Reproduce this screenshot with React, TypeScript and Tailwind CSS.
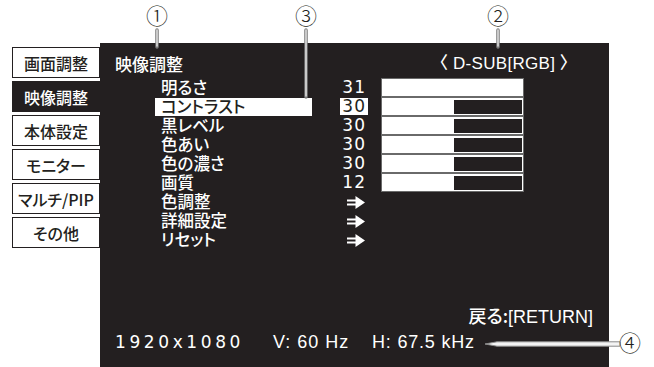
import React from 'react';

const tabs = ['画面調整', '映像調整', '本体設定', 'モニター', 'マルチ/PIP', 'その他'];

type Row = { label: string; value?: string; dark?: number; arrow?: boolean; selected?: boolean };

const rows: Row[] = [
  { label: '明るさ', value: '31', dark: 0 },
  { label: 'コントラスト', value: '30', dark: 68, selected: true },
  { label: '黒レベル', value: '30', dark: 68 },
  { label: '色あい', value: '30', dark: 68 },
  { label: '色の濃さ', value: '30', dark: 68 },
  { label: '画質', value: '12', dark: 68 },
  { label: '色調整', arrow: true },
  { label: '詳細設定', arrow: true },
  { label: 'リセット', arrow: true },
];

const jp = "font-['Noto_Sans_CJK_JP','Noto_Sans',sans-serif] [font-feature-settings:'palt']";

function Arrow() {
  return (
    <svg width="19" height="13" viewBox="0 0 19 13" className="block">
      <rect x="0" y="3.5" width="9" height="2" fill="white" />
      <rect x="0" y="7.5" width="9" height="2" fill="white" />
      <polygon points="8.5,0 18,6.5 8.5,13" fill="white" />
    </svg>
  );
}

function Callout({ n, left, top }: { n: string; left: number; top: number }) {
  return (
    <span
      className="absolute w-[30px] h-[30px] text-center leading-[30px] text-[22px] text-[#231f20] font-light whitespace-nowrap font-['DejaVu_Sans','Noto_Sans_CJK_JP',sans-serif]"
      style={{ left, top }}
    >
      {n}
    </span>
  );
}

export default function App() {
  return (
    <div className={`relative w-[654px] h-[367px] bg-white overflow-hidden font-medium ${jp}`}>
      <div className="flex pt-[43px]">
        {/* side tabs */}
        <div className="w-[100px] pl-[12px] pt-[4px] flex flex-col gap-[3px]">
          {tabs.map((t, i) =>
            i === 1 ? (
              <div key={t} className="w-[88px] h-[31px] bg-[#231f20] text-white text-[16px] flex items-center justify-center">
                {t}
              </div>
            ) : (
              <div
                key={t}
                className="w-[88px] h-[31px] bg-white border border-[#231f20] text-[#231f20] text-[16px] flex items-center justify-center whitespace-nowrap"
              >
                {t}
              </div>
            )
          )}
        </div>

        {/* menu panel */}
        <div className="w-[509px] h-[324px] bg-[#231f20] text-white flex flex-col">
          <div className="mt-[11px] h-[20px] flex items-center justify-between pl-[15px] pr-[40px]">
            <span className="text-[17px]">映像調整</span>
            <span className="text-[17px] tracking-[0.3px] font-['Liberation_Sans','Noto_Sans_CJK_JP',sans-serif]">〈 D-SUB[RGB] 〉</span>
          </div>

          <div className="mt-[4px] flex flex-col">
            {rows.map((r) => (
              <div key={r.label} className="h-[19px] flex items-center pl-[55px]">
                <div
                  className={`w-[157px] h-[18px] pl-[6px] flex items-center text-[16.5px] leading-none ${
                    r.selected ? 'bg-white text-[#231f20]' : ''
                  }`}
                >
                  {r.label}
                </div>
                <div className="ml-[28px] w-[28px] h-[17px] flex items-center justify-end">
                  {r.arrow ? (
                    <div className="pr-[2px] pt-[2px]">
                      <Arrow />
                    </div>
                  ) : (
                    <span
                      className={`h-[17px] w-[28px] pr-[2px] text-right text-[17px] leading-[17px] tracking-[1px] font-normal font-['DejaVu_Sans',sans-serif] ${
                        r.selected ? 'bg-white text-[#231f20]' : ''
                      }`}
                    >
                      {r.value}
                    </span>
                  )}
                </div>
                {!r.arrow && (
                  <div className="ml-[14px] w-[141px] h-[17px] bg-white p-[1.5px] flex justify-end ring-1 ring-[#6a6a6a]">
                    <div className="h-full bg-[#231f20]" style={{ width: r.dark }} />
                  </div>
                )}
              </div>
            ))}
          </div>

          <div className="flex-1" />

          <div className="flex justify-end pr-[16px] text-[18px] leading-none">
            <span>
              戻る:<span className="font-['Liberation_Sans',sans-serif] font-normal">[RETURN]</span>
            </span>
          </div>
          <div className="mt-[6px] mb-[15px] h-[20px] flex items-center pl-[15px] font-['Liberation_Sans',sans-serif] font-normal text-[18px] leading-none">
            <span className="w-[158px] tracking-[3.6px] font-['DejaVu_Sans',sans-serif] text-[17px]">1920x1080</span>
            <span className="w-[99px] tracking-[1px]">V: 60 Hz</span>
            <span className="tracking-[0.8px]">H: 67.5 kHz</span>
          </div>
        </div>
      </div>

      {/* annotation callouts */}
      <svg className="absolute inset-0 pointer-events-none" width="654" height="367">
        {[
          [157, 30, 47],
          [498, 30, 47],
          [306, 30, 97],
        ].map(([x, y1, y2]) => (
          <g key={x}>
            <line x1={x} y1={y1} x2={x} y2={y2} stroke="#7a7a7a" strokeWidth="3.5" strokeLinecap="round" />
            <line x1={x} y1={y1} x2={x} y2={y2 - 1} stroke="#f4f4f4" strokeWidth="1.3" strokeLinecap="round" />
          </g>
        ))}
        <polygon points="485,344 497,341.8 620,341.8 620,346.2 497,346.2" fill="#f4f4f4" stroke="#8a8a8a" strokeWidth="1" />
      </svg>
      <Callout n="①" left={142} top={2} />
      <Callout n="③" left={291} top={2} />
      <Callout n="②" left={483} top={2} />
      <Callout n="④" left={615} top={329} />
    </div>
  );
}
